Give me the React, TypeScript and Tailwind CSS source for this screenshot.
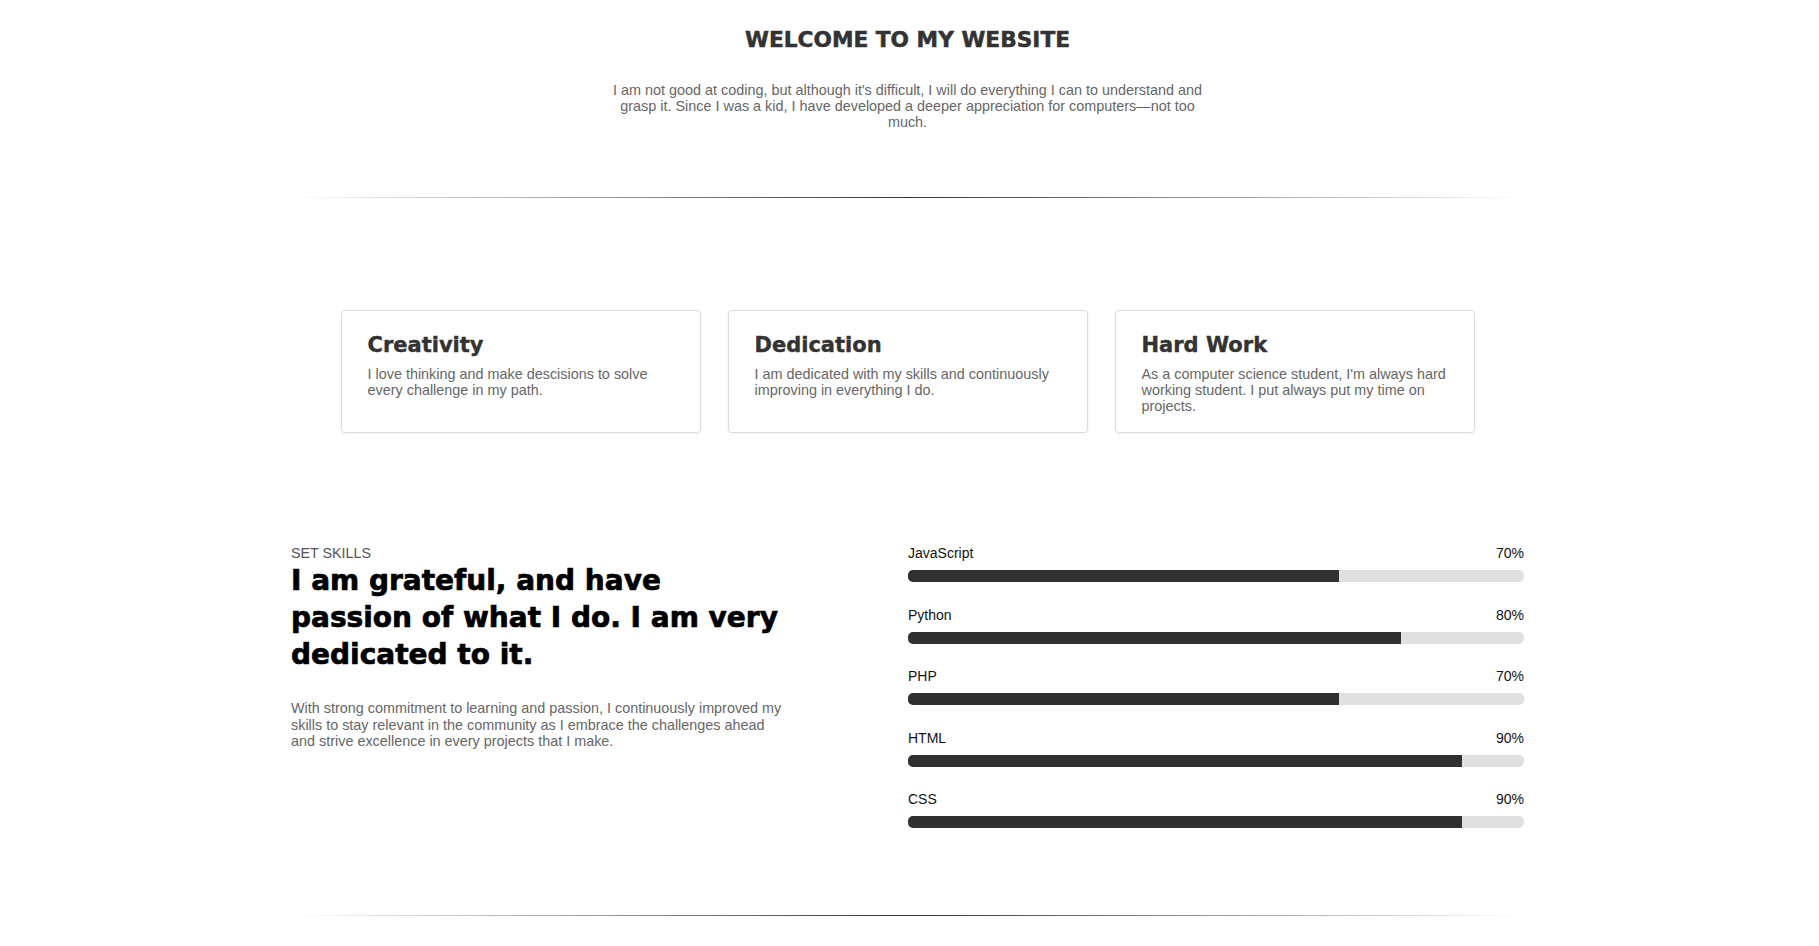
const intro =
  "I am not good at coding, but although it's difficult, I will do everything I can to understand and grasp it. Since I was a kid, I have developed a deeper appreciation for computers\u2014not too much.";

const features = [
  {
    title: "Creativity",
    text: "I love thinking and make descisions to solve every challenge in my path.",
  },
  {
    title: "Dedication",
    text: "I am dedicated with my skills and continuously improving in everything I do.",
  },
  {
    title: "Hard Work",
    text: "As a computer science student, I'm always hard working student. I put always put my time on projects.",
  },
];

const skills = [
  { name: "JavaScript", value: 70 },
  { name: "Python", value: 80 },
  { name: "PHP", value: 70 },
  { name: "HTML", value: 90 },
  { name: "CSS", value: 90 },
];

function Divider() {
  return (
    <div className="mx-auto h-px w-[1233px] bg-[linear-gradient(to_right,rgba(0,0,0,0),rgba(0,0,0,0.8),rgba(0,0,0,0))]" />
  );
}

export default function App() {
  return (
    <main className="min-h-screen bg-white pr-[4px] pt-[27px] font-['Liberation_Sans',Arial,sans-serif] text-[14px]">
      <section className="flex flex-col items-center">
        <h1 className="font-['DejaVu_Sans',sans-serif] text-[21.7px] font-bold leading-[26px] text-[#333] [-webkit-text-stroke:0.5px_#333]">
          WELCOME TO MY WEBSITE
        </h1>
        <p className="mt-[29px] max-w-[600px] text-center text-[14.4px] leading-[16.2px] text-[#666]">
          {intro}
        </p>
      </section>

      <div className="mt-[66px]">
        <Divider />
      </div>

      <section className="mx-auto mt-[112px] grid w-[1134px] grid-cols-3 gap-[27px]">
        {features.map((f) => (
          <div
            key={f.title}
            className="rounded-[4px] border border-[#dcdcdc] bg-white px-[26px] pb-[18px] pt-[22px] shadow-[0_1px_3px_rgba(0,0,0,0.05)]"
          >
            <h2 className="font-['DejaVu_Sans',sans-serif] text-[21px] font-bold leading-[24.4px] text-[#333] [-webkit-text-stroke:0.4px_#333]">
              {f.title}
            </h2>
            <p className="mt-[9px] text-[14.4px] leading-[16.1px] text-[#666]">{f.text}</p>
          </div>
        ))}
      </section>

      <section className="mx-auto mt-[112px] flex w-[1233px] justify-between">
        <div className="w-[500px]">
          <p className="text-[14.3px] leading-[16px] text-[#555]">SET SKILLS</p>
          <h2 className="mt-px w-[495px] font-['DejaVu_Sans',sans-serif] text-[28px] font-bold leading-[37px] text-black [-webkit-text-stroke:0.7px_#000]">
            I am grateful, and have passion of what I do. I am very dedicated to it.
          </h2>
          <p className="mt-[27px] text-[14.4px] leading-[16.2px] text-[#666]">
            With strong commitment to learning and passion, I continuously improved my skills to
            stay relevant in the community as I embrace the challenges ahead and strive excellence
            in every projects that I make.
          </p>
        </div>

        <div className="flex w-[616px] flex-col gap-[24.5px]">
          {skills.map((s) => (
            <div key={s.name}>
              <div className="flex justify-between leading-[16px] text-[#111]">
                <span>{s.name}</span>
                <span>{s.value}%</span>
              </div>
              <div className="mt-[9px] h-[12px] overflow-hidden rounded-[5px] bg-[#e0e0e0]">
                <div className="h-full bg-[#303030]" style={{ width: `${s.value}%` }} />
              </div>
            </div>
          ))}
        </div>
      </section>

      <div className="mt-[87px] pb-[30px]">
        <Divider />
      </div>
    </main>
  );
}
